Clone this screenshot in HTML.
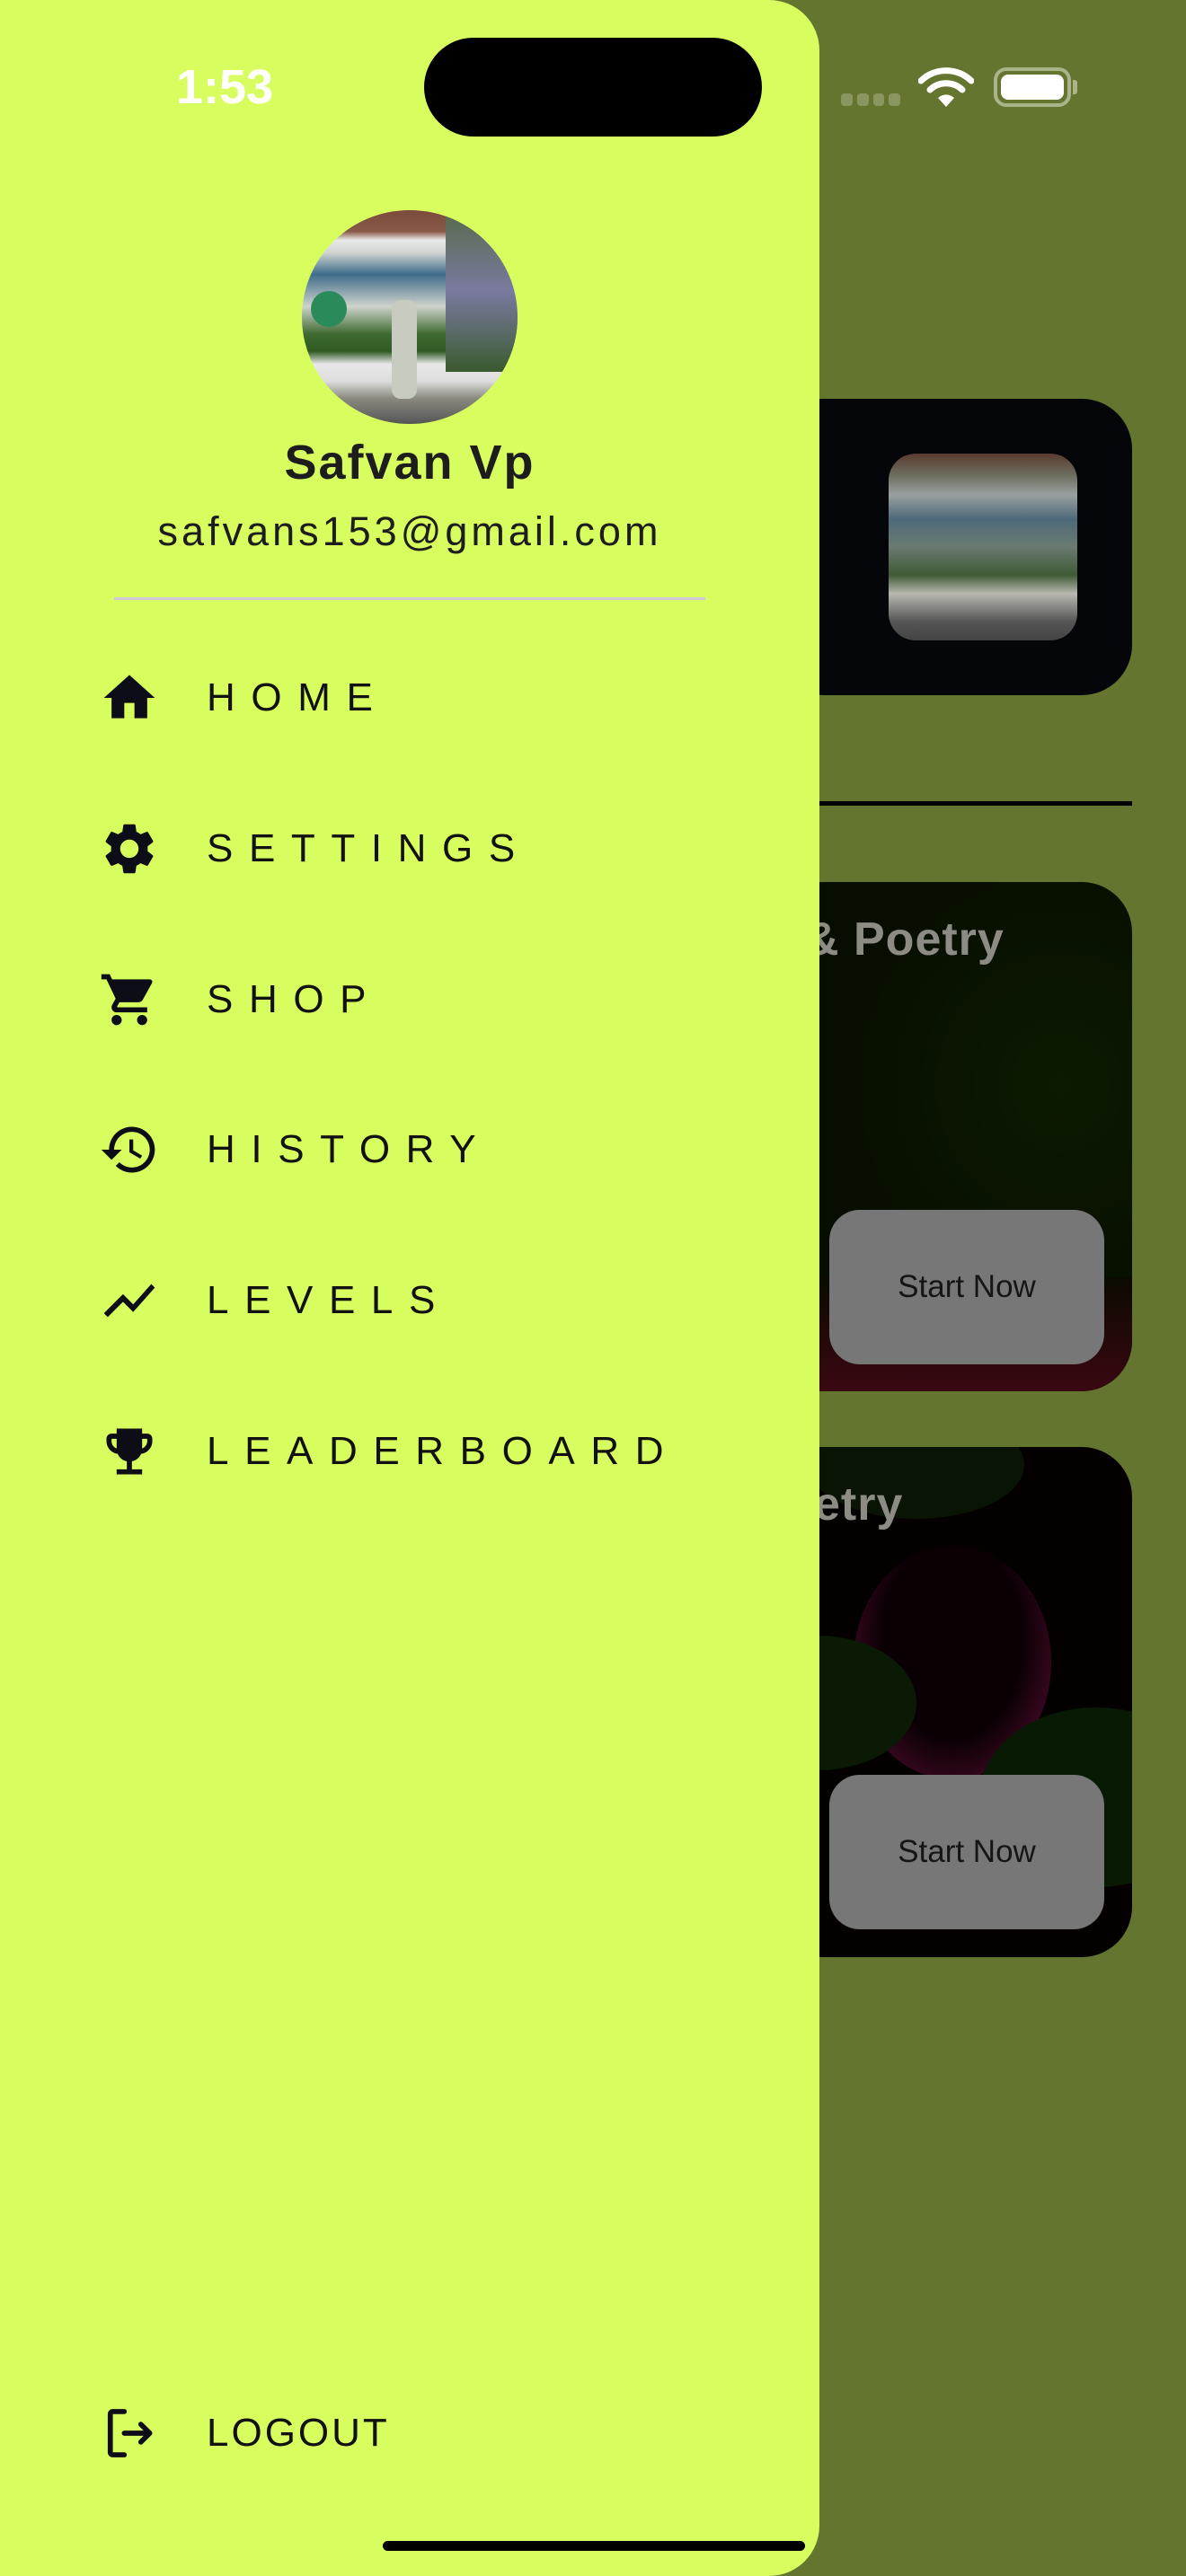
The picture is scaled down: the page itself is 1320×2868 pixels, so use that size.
<!DOCTYPE html>
<html><head><meta charset="utf-8"><style>
*{margin:0;padding:0;box-sizing:border-box}
body{width:1320px;height:2868px;background:#63752e;position:relative;overflow:hidden;font-family:"Liberation Sans",sans-serif}
.abs{position:absolute}
.drawer{left:0;top:0;width:912px;height:2868px;background:#d7fe5e;border-radius:0 56px 56px 0;z-index:5}
.item{position:absolute;left:0;height:80px;z-index:6}
.item svg{position:absolute;left:110px;top:6px;width:68px;height:68px}
.item span{position:absolute;left:230px;top:14px;font-size:44px;letter-spacing:0.4em;color:#111;line-height:52px}
.btn{background:#777;border-radius:34px;color:#151515;font-size:35px;text-align:center}
</style></head><body>
<div class="abs" style="left:860px;top:444px;width:400px;height:330px;background:#05060a;border-radius:56px"></div>
<div class="abs" style="left:989px;top:505px;width:210px;height:208px;border-radius:30px;overflow:hidden;background:linear-gradient(180deg,#5a3a30 0%,#6d7060 12%,#9aa0a0 22%,#4d6a7a 35%,#6a7a70 50%,#3f5a35 65%,#b8b8b0 75%,#555 90%,#444 100%)"></div>
<div class="abs" style="left:860px;top:892px;width:400px;height:5px;background:#000"></div>
<div class="abs" style="left:860px;top:982px;width:400px;height:567px;background:radial-gradient(ellipse at 80% 40%,#0c1a02,#070d00 60%),#070d00;border-radius:56px;overflow:hidden">
 <div class="abs" style="left:0;top:440px;width:400px;height:127px;background:linear-gradient(180deg,#0a0a00,#3a0812)"></div>
</div>
<div class="abs" style="left:896px;top:1016px;font-size:52px;font-weight:bold;color:#8c8c84;letter-spacing:1px;z-index:1">&amp; Poetry</div>
<div class="abs btn" style="left:923px;top:1347px;width:306px;height:172px;line-height:172px;z-index:1">Start Now</div>
<div class="abs" style="left:860px;top:1611px;width:400px;height:568px;background:#050000;border-radius:56px;overflow:hidden">
 <div class="abs" style="left:90px;top:110px;width:220px;height:260px;border-radius:50%;background:radial-gradient(ellipse at 50% 40%,#0a0004 50%,#4a0a2a 85%,#7a8a20)"></div>
 <div class="abs" style="left:-60px;top:210px;width:220px;height:150px;border-radius:50%;background:#0a1a04"></div>
 <div class="abs" style="left:230px;top:290px;width:260px;height:200px;border-radius:50%;background:#081a04"></div>
 <div class="abs" style="left:40px;top:-40px;width:240px;height:120px;border-radius:50%;background:#0a1404"></div>
</div>
<div class="abs" style="left:906px;top:1645px;font-size:52px;font-weight:bold;color:#8c8c84;letter-spacing:1px;z-index:1">etry</div>
<div class="abs btn" style="left:923px;top:1976px;width:306px;height:172px;line-height:172px;z-index:1">Start Now</div>
<div class="abs" style="left:936px;top:104px;width:66px;height:14px;display:flex;gap:5px"><i style="flex:1;background:#8a9660;border-radius:4px"></i><i style="flex:1;background:#8a9660;border-radius:4px"></i><i style="flex:1;background:#8a9660;border-radius:4px"></i><i style="flex:1;background:#8a9660;border-radius:4px"></i></div>
<svg class="abs" style="left:1022px;top:74px" width="62" height="46" viewBox="0 0 62 46"><path d="M3 16a40 40 0 0 1 56 0" stroke="#fff" stroke-width="7" fill="none" stroke-linecap="round"/><path d="M13 26a26 26 0 0 1 36 0" stroke="#fff" stroke-width="7" fill="none" stroke-linecap="round"/><path d="M22 35l9 10 9-10a13 13 0 0 0-18 0z" fill="#fff"/></svg>
<div class="abs" style="left:1106px;top:75px;width:86px;height:44px;border:4px solid #a9b48a;border-radius:14px;padding:4px"><div style="width:100%;height:100%;background:#fff;border-radius:8px"></div></div>
<div class="abs" style="left:1194px;top:89px;width:5px;height:16px;background:#a9b48a;border-radius:0 3px 3px 0"></div>
<div class="abs drawer"></div>
<div class="abs" style="left:196px;top:66px;font-size:54px;font-weight:bold;color:#fff;z-index:7">1:53</div>
<div class="abs" style="left:472px;top:42px;width:376px;height:110px;background:#000;border-radius:55px;z-index:7"></div>
<div class="abs" style="left:336px;top:234px;width:240px;height:238px;border-radius:50%;overflow:hidden;z-index:7;background:linear-gradient(180deg,#7a4a3a 0%,#8a5a48 10%,#e8eaea 14%,#d0d4d0 20%,#3e6c8a 30%,#cfd3cc 45%,#3d6a30 58%,#2f5a25 66%,#e8e8e8 72%,#ddd 80%,#8a8a80 88%,#555 100%)">
 <div class="abs" style="left:160px;top:0;width:80px;height:180px;background:linear-gradient(180deg,#556a4a,#7a7aa0,#3a5a30)"></div>
 <div class="abs" style="left:100px;top:100px;width:28px;height:110px;background:#c8ccc0;border-radius:10px"></div>
 <div class="abs" style="left:10px;top:90px;width:40px;height:40px;border-radius:50%;background:#2a8a5a"></div>
</div>
<div class="abs" style="left:0;top:484px;width:912px;text-align:center;font-size:54px;font-weight:bold;color:#1d1d1d;z-index:7;letter-spacing:2px">Safvan Vp</div>
<div class="abs" style="left:0;top:566px;width:912px;text-align:center;font-size:45px;color:#1d1d1d;z-index:7;letter-spacing:4px">safvans153@gmail.com</div>
<div class="abs" style="left:127px;top:665px;width:658px;height:3px;background:#cfcad8;z-index:7"></div>

<div class="item" style="top:737px"><svg viewBox="0 0 24 24"><path fill="#0d0d18" d="M10 20v-6h4v6h5v-8h3L12 3 2 12h3v8z"/></svg><span>HOME</span></div>
<div class="item" style="top:905px"><svg viewBox="0 0 24 24"><path fill="#0d0d18" d="M19.14 12.94c.04-.3.06-.61.06-.94 0-.32-.02-.64-.07-.94l2.03-1.58a.49.49 0 00.12-.61l-1.92-3.32a.488.488 0 00-.59-.22l-2.39.96c-.5-.38-1.03-.7-1.62-.94l-.36-2.54a.484.484 0 00-.48-.41h-3.84c-.24 0-.43.17-.47.41l-.36 2.54c-.59.24-1.13.57-1.62.94l-2.39-.96c-.22-.08-.47 0-.59.22L2.74 8.87c-.12.21-.08.47.12.61l2.03 1.58c-.05.3-.09.63-.09.94s.02.64.07.94l-2.03 1.58a.49.49 0 00-.12.61l1.92 3.32c.12.22.37.29.59.22l2.39-.96c.5.38 1.03.7 1.62.94l.36 2.54c.05.24.24.41.48.41h3.84c.24 0 .44-.17.47-.41l.36-2.54c.59-.24 1.13-.56 1.62-.94l2.39.96c.22.08.47 0 .59-.22l1.92-3.32c.12-.22.07-.47-.12-.61l-2.01-1.58zM12 15.6c-1.98 0-3.6-1.62-3.6-3.6s1.62-3.6 3.6-3.6 3.6 1.62 3.6 3.6-1.62 3.6-3.6 3.6z"/></svg><span>SETTINGS</span></div>
<div class="item" style="top:1073px"><svg viewBox="0 0 24 24"><path fill="#0d0d18" d="M7 18c-1.1 0-1.99.9-1.99 2S5.9 22 7 22s2-.9 2-2-.9-2-2-2zM1 2v2h2l3.6 7.59-1.35 2.45c-.16.28-.25.61-.25.96 0 1.1.9 2 2 2h12v-2H7.42c-.14 0-.25-.11-.25-.25l.03-.12.9-1.63h7.45c.75 0 1.41-.41 1.75-1.03l3.58-6.49A1.003 1.003 0 0020 4H5.21l-.94-2H1zm16 16c-1.1 0-1.99.9-1.99 2s.89 2 1.99 2 2-.9 2-2-.9-2-2-2z"/></svg><span>SHOP</span></div>
<div class="item" style="top:1240px"><svg viewBox="0 0 24 24"><path fill="#0d0d18" d="M13 3c-4.97 0-9 4.03-9 9H1l3.89 3.89.07.14L9 12H6c0-3.87 3.13-7 7-7s7 3.13 7 7-3.13 7-7 7c-1.93 0-3.68-.79-4.94-2.06l-1.42 1.42C8.27 19.990 10.51 21 13 21c4.97 0 9-4.03 9-9s-4.03-9-9-9zm-1 5v5l4.28 2.54.72-1.21-3.5-2.08V8H12z"/></svg><span>HISTORY</span></div>
<div class="item" style="top:1408px"><svg viewBox="0 0 24 24"><path fill="#0d0d18" d="M3.5 18.49l6-6.01 4 4L22 6.92l-1.41-1.41-7.09 7.97-4-4L2 16.99z"/></svg><span>LEVELS</span></div>
<div class="item" style="top:1576px"><svg viewBox="0 0 24 24"><path fill="#0d0d18" d="M19 5h-2V3H7v2H5c-1.1 0-2 .9-2 2v1c0 2.55 1.92 4.63 4.39 4.94.63 1.5 1.98 2.63 3.61 2.96V19H7v2h10v-2h-4v-3.1c1.63-.33 2.98-1.46 3.61-2.96C19.08 12.63 21 10.55 21 8V7c0-1.1-.9-2-2-2zM5 8V7h2v3.82C5.84 10.4 5 9.3 5 8zm14 0c0 1.3-.84 2.4-2 2.82V7h2v1z"/></svg><span>LEADERBOARD</span></div>
<div class="item" style="top:2669px"><svg viewBox="0 0 24 24"><path fill="none" stroke="#0d0d18" stroke-width="2" stroke-linecap="round" stroke-linejoin="round" d="M10 3.5H5.5a1 1 0 0 0-1 1v15a1 1 0 0 0 1 1H10M10 12h10M16.5 8.5L20 12l-3.5 3.5"/></svg><span style="letter-spacing:3px">LOGOUT</span></div>
<div class="abs" style="left:426px;top:2829px;width:470px;height:11px;background:#000;border-radius:6px;z-index:8"></div>
</body></html>
